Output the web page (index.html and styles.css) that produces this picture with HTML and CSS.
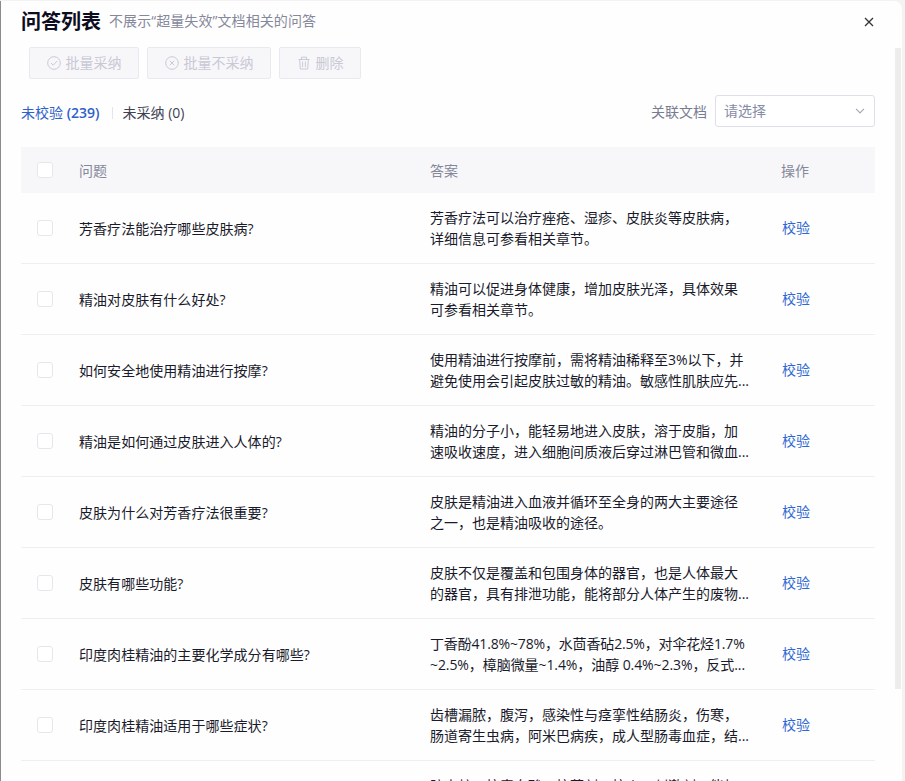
FILE: index.html
```html
<!DOCTYPE html>
<html lang="zh-CN">
<head>
<meta charset="utf-8">
<title>问答列表</title>
<link rel="stylesheet" href="styles.css">
</head>
<body>
<main class="panel">
  <header class="head">
    <h1>问答列表</h1>
    <p>不展示“超量失效”文档相关的问答</p>
    <svg class="close" viewBox="0 0 10 10"><path d="M1 1l8 8M9 1L1 9"/></svg>
  </header>
  <div class="actions">
    <button class="adopt" disabled><svg viewBox="0 0 14 14"><circle cx="7" cy="7" r="6.3"/><path d="M4 7l2.2 2.2L10.2 5"/></svg>批量采纳</button>
    <button class="reject" disabled><svg viewBox="0 0 14 14"><circle cx="7" cy="7" r="6.3"/><path d="M4.8 4.8l4.4 4.4M9.2 4.8L4.8 9.2"/></svg>批量不采纳</button>
    <button class="remove" disabled><svg viewBox="0 0 14 14"><path d="M1.5 3.5h11M4.5 3.5V1.2h5v2.3M2.7 3.5l.6 9.5h7.4l.6-9.5M5.6 5.5v5.5M8.4 5.5v5.5"/></svg>删除</button>
  </div>
  <div class="filters">
    <span class="tab active">未校验 <b>(239)</b></span><i></i><span class="tab">未采纳 (0)</span>
    <label>关联文档</label>
    <div class="select">请选择<svg viewBox="0 0 10 6"><path d="M1 .8l4 4 4-4"/></svg></div>
  </div>
  <section class="table">
    <div class="row thead"><span class="box"></span><div>问题</div><div>答案</div><div>操作</div></div>
    <div class="row"><span class="box"></span><div class="q">芳香疗法能治疗哪些皮肤病?</div><div class="a">芳香疗法可以治疗痤疮、湿疹、皮肤炎等皮肤病，<br>详细信息可参看相关章节。</div><a>校验</a></div>
    <div class="row"><span class="box"></span><div class="q">精油对皮肤有什么好处?</div><div class="a">精油可以促进身体健康，增加皮肤光泽，具体效果<br>可参看相关章节。</div><a>校验</a></div>
    <div class="row"><span class="box"></span><div class="q">如何安全地使用精油进行按摩?</div><div class="a">使用精油进行按摩前，需将精油稀释至3%以下，并<br>避免使用会引起皮肤过敏的精油。敏感性肌肤应先...</div><a>校验</a></div>
    <div class="row"><span class="box"></span><div class="q">精油是如何通过皮肤进入人体的?</div><div class="a">精油的分子小，能轻易地进入皮肤，溶于皮脂，加<br>速吸收速度，进入细胞间质液后穿过淋巴管和微血...</div><a>校验</a></div>
    <div class="row"><span class="box"></span><div class="q">皮肤为什么对芳香疗法很重要?</div><div class="a">皮肤是精油进入血液并循环至全身的两大主要途径<br>之一，也是精油吸收的途径。</div><a>校验</a></div>
    <div class="row"><span class="box"></span><div class="q">皮肤有哪些功能?</div><div class="a">皮肤不仅是覆盖和包围身体的器官，也是人体最大<br>的器官，具有排泄功能，能将部分人体产生的废物...</div><a>校验</a></div>
    <div class="row"><span class="box"></span><div class="q">印度肉桂精油的主要化学成分有哪些?</div><div class="a"><span class="dense">丁香酚41.8%~78%，水茴香砧2.5%，对伞花烃1.7%</span><br><span class="dense last">~2.5%，樟脑微量~1.4%，油醇 0.4%~2.3%，反式...</span></div><a>校验</a></div>
    <div class="row"><span class="box"></span><div class="q">印度肉桂精油适用于哪些症状?</div><div class="a">齿槽漏脓，腹泻，感染性与痉挛性结肠炎，伤寒，<br>肠道寄生虫病，阿米巴病疾，成人型肠毒血症，结...</div><a>校验</a></div>
    <div class="row"><span class="box"></span><div class="q"></div><div class="a">防虫蛀，抗毒血酸，抗菌剂，抗炎，刺激剂，能加<br>强免疫力。</div></div>
  </section>
  <div class="scroll"></div>
</main>
</body>
</html>
```
FILE: styles.css
```css
* { box-sizing: border-box; }
html, body { height: 100%; overflow: hidden; }
body {
  margin: 0;
  padding: 1px 3px 0 0;
  background: #f3f3f4;
  font: 14px/21px "Open Sans", "Noto Sans CJK SC", sans-serif;
  color: #191a2b;
}
svg { fill: none; stroke: currentColor; }
.panel {
  position: relative;
  height: 780px;
  padding: 0 27px 0 20px;
  border-left: 1px solid #8b8b8d;
  border-radius: 0 8px 0 0;
  background: #fefefe;
  overflow: hidden;
  white-space: nowrap;
}
.head { display: flex; height: 46px; padding-top: 5px; }
h1 { margin: 0; font-size: 20px; line-height: 32px; font-weight: 700; color: #0c0d20; }
.head p { margin: 4px 0 0 8px; color: #85889b; letter-spacing: .08px; }
.close { width: 10px; height: 10px; margin: 11px 1px 0 auto; color: #333; stroke-width: 1.3; }
.actions { display: flex; gap: 8px; padding-left: 8px; }
button {
  display: flex;
  align-items: center;
  justify-content: center;
  gap: 5px;
  height: 32px;
  padding: 0 0 1px;
  border: 1px solid #e9e9f0;
  border-radius: 2px;
  background: #f7f7fa;
  color: #c9c9d5;
  font: inherit;
}
button svg { width: 14px; height: 14px; }
.adopt { width: 110px; }
.reject { width: 124px; }
.remove { width: 82px; }
.filters { display: flex; align-items: center; height: 32px; margin-top: 16px; }
.tab { padding-top: 3px; color: #404253; }
.tab.active { color: #2e60ca; }
.tab b { font-weight: 600; }
.filters i { width: 1px; height: 12px; margin: 4px 10px 0 12px; background: #e4e5eb; }
.filters label { margin-left: auto; color: #797c91; }
.select {
  display: flex;
  align-items: center;
  justify-content: space-between;
  width: 160px;
  height: 32px;
  margin-left: 8px;
  padding: 0 9px 1px 8px;
  border: 1px solid #dedfe7;
  border-radius: 3px;
  background: #fff;
  color: #858ca5;
}
.select svg { width: 10px; height: 6px; color: #a7a9b2; stroke-width: 1.2; }
.table { margin-top: 20px; }
.row {
  display: grid;
  grid-template-columns: 42px 351px 351px 1fr;
  align-items: center;
  height: 71px;
  padding-left: 16px;
  border-bottom: 1px solid #efeff1;
}
.row.thead { height: 46px; border: 0; background: #f7f7f9; color: #85889b; }
.box { width: 16px; height: 16px; border: 1px solid #e6e7ec; border-radius: 3px; background: #fff; }
.q { padding-top: 1px; letter-spacing: .05px; }
.a { padding-bottom: 1px; }
.dense { letter-spacing: -.16px; }
.dense.last { letter-spacing: -.08px; }
.row a { padding: 0 0 1px 1px; color: #2e68d4; }
.scroll { position: absolute; top: 47px; right: 1px; width: 6px; height: 641px; background: #ededee; }
```
